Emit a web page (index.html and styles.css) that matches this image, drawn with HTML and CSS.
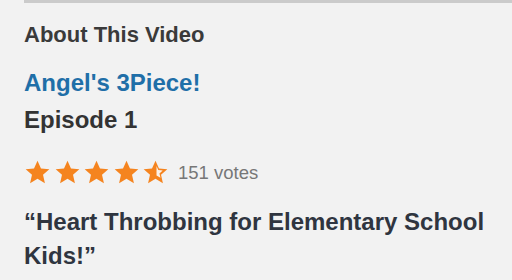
FILE: index.html
```html
<!DOCTYPE html>
<html lang="en">
<head>
    <meta charset="UTF-8">
    <title>About This Video</title>
    <link rel="stylesheet" href="styles.css">
</head>
<body>
    <div class="rule"></div>
    <div class="about">
        <h2 class="about-title">About This Video</h2>
        <a class="show-name" href="#">Angel's 3Piece!</a>
        <div class="episode">Episode 1</div>

        <div class="rating">
            <div class="stars">
                <svg class="star" viewBox="0 0 24 24"><path d="M12 1.5l3.1 6.9 7.4.7-5.6 5 1.7 7.4L12 17.6l-6.6 3.9 1.7-7.4-5.6-5 7.4-.7z"/></svg>
                <svg class="star" viewBox="0 0 24 24"><path d="M12 1.5l3.1 6.9 7.4.7-5.6 5 1.7 7.4L12 17.6l-6.6 3.9 1.7-7.4-5.6-5 7.4-.7z"/></svg>
                <svg class="star" viewBox="0 0 24 24"><path d="M12 1.5l3.1 6.9 7.4.7-5.6 5 1.7 7.4L12 17.6l-6.6 3.9 1.7-7.4-5.6-5 7.4-.7z"/></svg>
                <svg class="star" viewBox="0 0 24 24"><path d="M12 1.5l3.1 6.9 7.4.7-5.6 5 1.7 7.4L12 17.6l-6.6 3.9 1.7-7.4-5.6-5 7.4-.7z"/></svg>
                <svg class="star" viewBox="0 0 24 24">
                    <path d="M12 1.5l3.1 6.9 7.4.7-5.6 5 1.7 7.4L12 17.6l-6.6 3.9 1.7-7.4-5.6-5 7.4-.7z"/>
                    <path class="star-empty" d="M12.9 6.2l1.6 3.6 3.9.4-2.9 2.6.9 3.9-3.5-2z"/>
                </svg>
            </div>
            <span class="votes">151 votes</span>
        </div>

        <p class="tagline">“Heart Throbbing for Elementary School Kids!”</p>
    </div>
</body>
</html>
```

FILE: styles.css
```css
* {
    margin: 0;
    padding: 0;
    box-sizing: border-box;
}

body {
    font-family: 'Liberation Sans', Arial, sans-serif;
    background: #f2f2f2;
    color: #333;
    width: 512px;
    height: 280px;
    overflow: hidden;
}

.rule {
    margin-left: 24px;
    height: 3px;
    background: #cbcbcb;
}

.about {
    padding: 0 24px;
}

.about-title {
    font-size: 22px;
    font-weight: bold;
    line-height: 26px;
    margin-top: 19px;
    color: #3a3a3a;
}

.show-name {
    display: block;
    margin-top: 21px;
    font-size: 24px;
    font-weight: bold;
    line-height: 28px;
    color: #1f6fa8;
    text-decoration: none;
}

.episode {
    margin-top: 9px;
    font-size: 24px;
    font-weight: bold;
    line-height: 28px;
    color: #333;
}

.rating {
    display: flex;
    align-items: center;
    margin-top: 25px;
}

.stars {
    display: flex;
    gap: 2.5px;
}

.star {
    width: 27px;
    height: 27px;
    fill: #f5841f;
}

.star-empty {
    fill: #fbf3ec;
}

.votes {
    margin-left: 9px;
    font-size: 18.5px;
    color: #777;
}

.tagline {
    margin-top: 19px;
    font-size: 24px;
    font-weight: bold;
    line-height: 34px;
    color: #2f3540;
}
```
